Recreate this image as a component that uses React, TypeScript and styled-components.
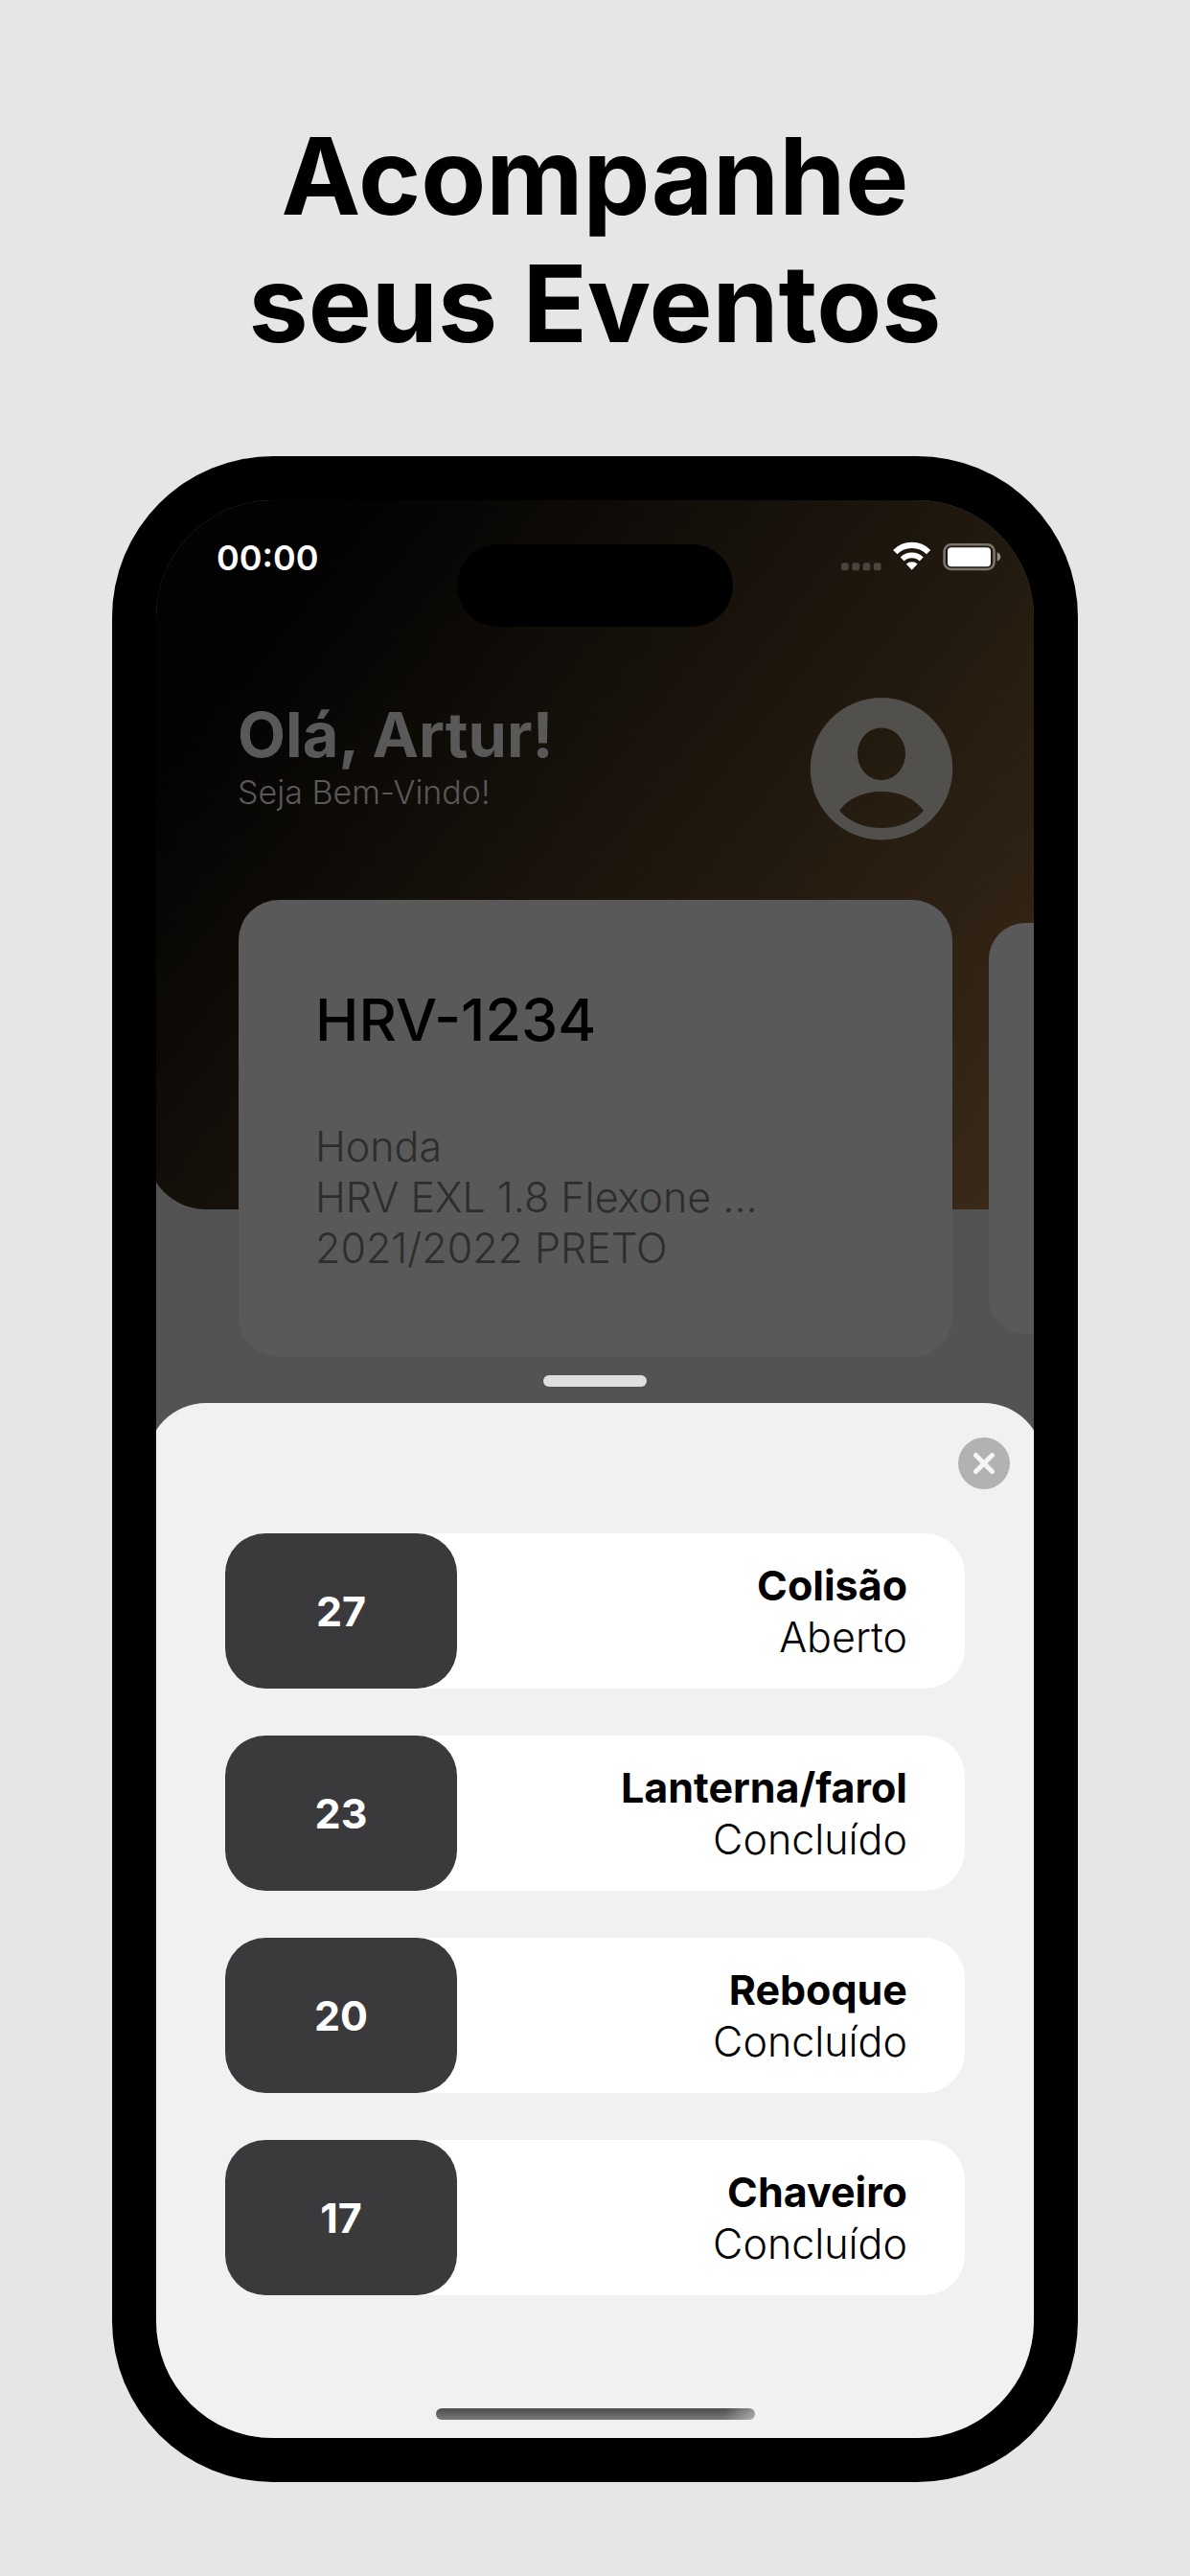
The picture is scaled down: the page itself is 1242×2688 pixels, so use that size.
import React from "react";
import styled, { createGlobalStyle } from "styled-components";

const GlobalStyle = createGlobalStyle`
  *, *::before, *::after { box-sizing: border-box; }
  body {
    margin: 0;
    background: #e6e6e6;
    font-family: Inter, "Liberation Sans", sans-serif;
    color: #000;
  }
  h1, h2, p, ul { margin: 0; padding: 0; }
`;

const Page = styled.main`
  display: flex;
  flex-direction: column;
  gap: 93px;
  padding: 117px 117px 98px;
`;

const Title = styled.h1`
  font-size: 111px;
  line-height: 133px;
  font-weight: 700;
  text-align: center;
`;

const Line = styled.span`
  display: block;
`;

const Phone = styled.section`
  padding: 46px;
  background: #000;
  border-radius: 168px;
`;

const Screen = styled.div`
  position: relative;
  overflow: hidden;
  border-radius: 122px;
  background: #535353;
`;

const Header = styled.header`
  height: 740px;
  margin-left: -10px;
  padding: 46px 0 0 10px;
  border-bottom-left-radius: 62px;
  background: linear-gradient(128deg, #020202 14%, #1d160d 54%, #3a2a18 98%);
`;

const StatusBar = styled.div`
  display: grid;
  grid-template-columns: minmax(0, 1fr) 288px minmax(0, 1fr);
  height: 86px;
  padding: 0 33px;
`;

const Clock = styled.time`
  padding-left: 30px;
  font-size: 36px;
  line-height: 28px;
  font-weight: 600;
  color: #fff;
`;

const Island = styled.div`
  border-radius: 43px;
  background: #000;
`;

const StatusIcons = styled.svg`
  justify-self: end;
  width: 168px;
  height: 34px;
  margin-top: -4px;
`;

const Greeting = styled.div`
  display: flex;
  justify-content: space-between;
  align-items: flex-start;
  margin-top: 74px;
  padding: 0 84px 0 85px;
  color: #595959;
`;

const Hello = styled.h2`
  font-size: 65px;
  line-height: 78px;
  font-weight: 700;
`;

const Welcome = styled.p`
  font-size: 34px;
  line-height: 42px;
  font-weight: 300;
`;

const Avatar = styled.svg`
  width: 150px;
  height: 150px;
`;

const Carousel = styled.div`
  display: flex;
  align-items: center;
  gap: 38px;
  margin: -323px 0 0 86px;
`;

const Card = styled.article<{ $peek?: boolean }>`
  flex: none;
  width: calc(100% - 85px);
  height: ${(p) => (p.$peek ? 429 : 477)}px;
  padding: 81px 80px;
  border-radius: ${(p) => (p.$peek ? 38 : 42)}px;
  background: #595959;
`;

const Plate = styled.h2`
  font-size: 61px;
  line-height: 88px;
  font-weight: 500;
`;

const Details = styled.p`
  margin-top: 62px;
  font-size: 43px;
  line-height: 53px;
  font-weight: 300;
  color: #2d2d2d;
`;

const Grabber = styled.div`
  width: 108px;
  height: 12px;
  margin: 19px auto 17px;
  border-radius: 6px;
  background: #dfdfdf;
`;

const Sheet = styled.section`
  display: flex;
  flex-direction: column;
  margin: 0 -10px;
  padding: 36px 35px 19px;
  border-radius: 62px 62px 0 0;
  background: #f1f1f1;
`;

const Close = styled.button`
  align-self: flex-end;
  width: 54px;
  height: 54px;
  padding: 0;
  border: 0;
  border-radius: 50%;
  background: #b2b2b2;
  svg { display: block; width: 54px; height: 54px; }
`;

const Events = styled.ul`
  display: flex;
  flex-direction: column;
  gap: 49px;
  margin: 46px 47px 118px 47px;
  list-style: none;
`;

const EventRow = styled.li`
  display: flex;
  justify-content: space-between;
  align-items: center;
  height: 162px;
  padding-right: 60px;
  border-radius: 42px;
  background: #fff;
  font-size: 43px;
  line-height: 54px;
`;

const Day = styled.div`
  display: grid;
  place-items: center;
  width: 242px;
  height: 100%;
  border-radius: 42px;
  background: #3a3a3c;
  font-weight: 700;
  color: #fff;
`;

const EventText = styled.div`
  text-align: right;
`;

const EventName = styled.p`
  font-weight: 700;
`;

const EventStatus = styled.p`
  font-weight: 300;
`;

const HomeBar = styled.div`
  align-self: center;
  width: 333px;
  height: 12px;
  border-radius: 6px;
  background:
    linear-gradient(100deg, transparent 90%, rgba(241, 241, 241, 0.45) 100%),
    linear-gradient(#4c4c4c, #7a7a7a);
`;

const events = [
  { day: 27, name: "Colisão", status: "Aberto" },
  { day: 23, name: "Lanterna/farol", status: "Concluído" },
  { day: 20, name: "Reboque", status: "Concluído" },
  { day: 17, name: "Chaveiro", status: "Concluído" },
];

export default function App() {
  return (
    <>
      <GlobalStyle />
      <Page>
        <Title>
          <Line>Acompanhe</Line>
          <Line>seus Eventos</Line>
        </Title>
        <Phone>
          <Screen>
            <Header>
              <StatusBar>
                <Clock>00:00</Clock>
                <Island />
                <StatusIcons viewBox="0 0 168 34" aria-hidden="true">
                  <g fill="#fff" fillOpacity="0.2">
                    <rect x="0" y="23.3" width="7.8" height="8" rx="2.6" />
                    <rect x="11.3" y="23.3" width="7.8" height="8" rx="2.6" />
                    <rect x="22.6" y="23.3" width="7.8" height="8" rx="2.6" />
                    <rect x="33.8" y="23.3" width="7.8" height="8" rx="2.6" />
                  </g>
                  <g fill="none" stroke="#fff">
                    <path d="M56.300 12.100a24.600 24.600 0 0 1 34.800 0" strokeWidth="6.200" />
                    <path d="M63.700 19.500a14.200 14.200 0 0 1 20 0" strokeWidth="5.800" />
                  </g>
                  <path d="M73.700 30.700l-5.900-6.200a9 9 0 0 1 11.800 0z" fill="#fff" />
                  <rect x="107.6" y="4.3" width="52" height="25.7" rx="7" fill="none" stroke="#fff" strokeOpacity="0.4" strokeWidth="2.6" />
                  <rect x="111" y="7.2" width="45" height="20" rx="4" fill="#fff" />
                  <path d="M162.700 12.300q3.600 1.500 3.600 4.700t-3.600 4.700z" fill="#fff" fillOpacity="0.5" />
                </StatusIcons>
              </StatusBar>
              <Greeting>
                <div>
                  <Hello>Olá, Artur!</Hello>
                  <Welcome>Seja Bem-Vindo!</Welcome>
                </div>
                <Avatar viewBox="0 0 150 150" aria-hidden="true">
                  <path
                    fill="#52504d"
                    fillRule="evenodd"
                    d="M75 0a74 74 0 1 1 0 148.500a74 74 0 1 1 0-148.500zM75 31.500c-14 0-25 12-25 27s11 27.500 25 27.500s25-12.500 25-27.500s-11-27-25-27zM31 118c9-13 25-20 44-20s35 7 44 20c-11 12-27 18-44 18s-33-6-44-18z"
                  />
                </Avatar>
              </Greeting>
            </Header>
            <Carousel>
              <Card>
                <Plate>HRV-1234</Plate>
                <Details>
                  <Line>Honda</Line>
                  <Line>HRV EXL 1.8 Flexone ...</Line>
                  <Line>2021/2022 PRETO</Line>
                </Details>
              </Card>
              <Card $peek />
            </Carousel>
            <Grabber />
            <Sheet>
              <Close type="button" aria-label="Fechar">
                <svg viewBox="0 0 54 54" aria-hidden="true">
                  <path d="M18.500 18.500l17 17m0-17l-17 17" stroke="#f5f5f5" strokeWidth="5" strokeLinecap="round" />
                </svg>
              </Close>
              <Events>
                {events.map((event) => (
                  <EventRow key={event.day}>
                    <Day>{event.day}</Day>
                    <EventText>
                      <EventName>{event.name}</EventName>
                      <EventStatus>{event.status}</EventStatus>
                    </EventText>
                  </EventRow>
                ))}
              </Events>
              <HomeBar />
            </Sheet>
          </Screen>
        </Phone>
      </Page>
    </>
  );
}
